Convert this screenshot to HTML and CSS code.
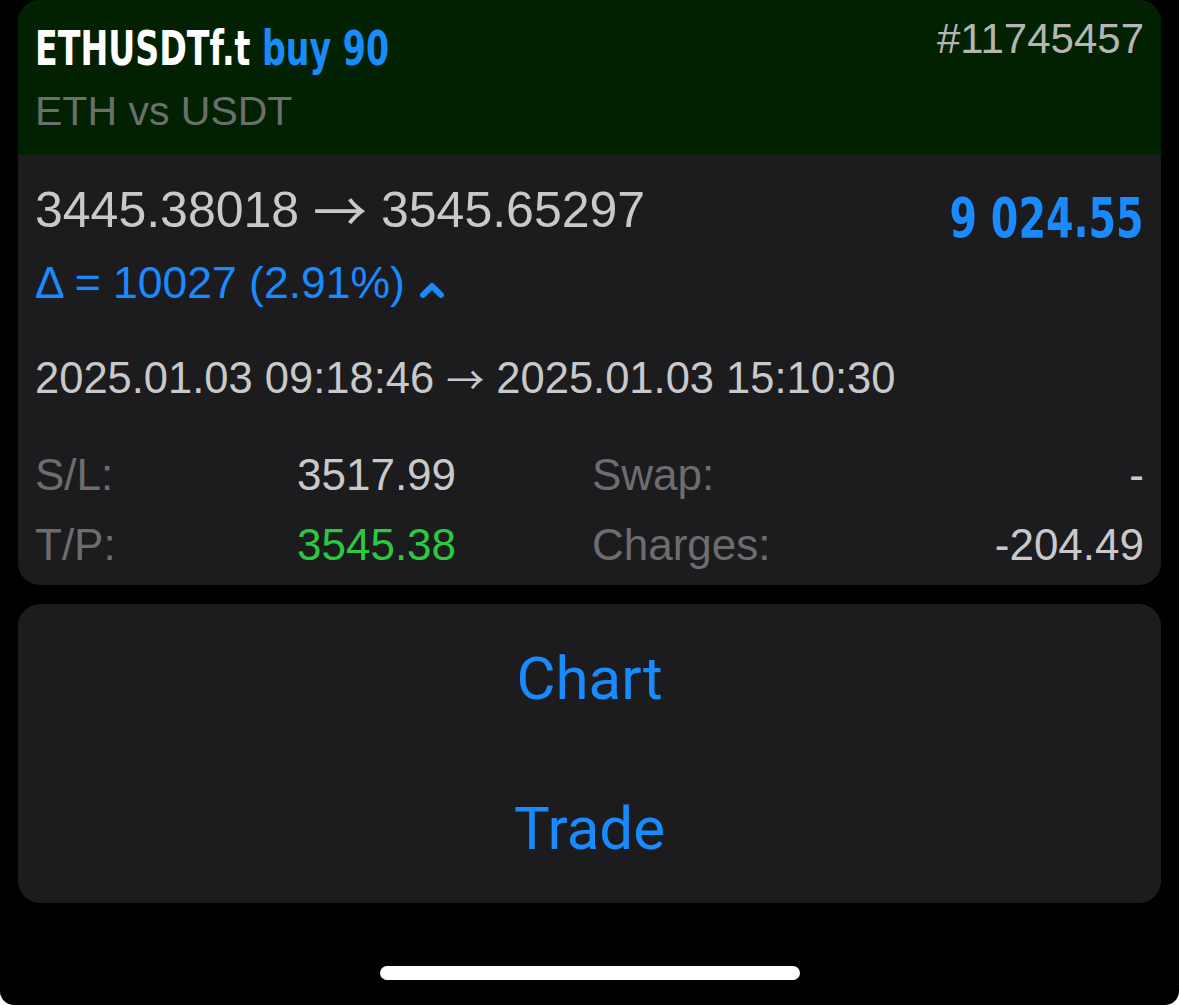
FILE: index.html
```html
<!DOCTYPE html>
<html lang="en">
<head>
<meta charset="UTF-8">
<meta name="viewport" content="width=device-width, initial-scale=1.0">
<title>Position ETHUSDTf.t</title>
<link rel="stylesheet" href="styles.css">
</head>
<body>

<div class="screen">

    <!-- Position card -->
    <div class="card position">
        <div class="head">
            <div class="head-left">
                <div class="title">ETHUSDTf.t <span class="side">buy 90</span></div>
                <div class="subtitle">ETH vs USDT</div>
            </div>
            <div class="ticket">#11745457</div>
        </div>

        <div class="details">
            <div class="prices">
                <div class="price-col">
                    <div class="price-line">3445.38018 <span class="arrow">&rarr;</span> 3545.65297</div>
                    <div class="delta">&Delta; = 10027 (2.91%)
                        <svg class="caret" width="26" height="18" viewBox="0 0 26 18">
                            <path d="M4 14 L13 5 L22 14" fill="none" stroke="#1a8aff" stroke-width="6" stroke-linecap="round" stroke-linejoin="round"/>
                        </svg>
                    </div>
                </div>
                <div class="profit">9 024.55</div>
            </div>

            <div class="times">2025.01.03 09:18:46 <span class="arrow">&rarr;</span> 2025.01.03 15:10:30</div>

            <div class="stats">
                <span class="label">S/L:</span>
                <span class="value">3517.99</span>
                <span class="label">Swap:</span>
                <span class="value right">-</span>

                <span class="label">T/P:</span>
                <span class="value green">3545.38</span>
                <span class="label">Charges:</span>
                <span class="value right">-204.49</span>
            </div>
        </div>
    </div>

    <!-- Actions -->
    <div class="card actions">
        <a class="action" href="#">Chart</a>
        <a class="action" href="#">Trade</a>
    </div>

    <div class="home-bar"></div>
</div>

</body>
</html>
```

FILE: styles.css
```css
body {
    margin: 0;
    background: #ffffff;
    font-family: "Liberation Sans", Arial, sans-serif;
}

.screen {
    height: 1005px;
    box-sizing: border-box;
    background: #000000;
    border-radius: 0 0 14px 14px;
    padding: 0 18px;
    display: flex;
    flex-direction: column;
}

.card {
    background: #1c1c1e;
    border-radius: 22px;
    overflow: hidden;
}

/* header */
.head {
    background: #012101;
    display: flex;
    justify-content: space-between;
    align-items: flex-start;
    padding: 15px 17px 20px;
}

.title {
    margin-top: 5px;
    display: inline-block;
    white-space: nowrap;
    font-family: "DejaVu Sans Condensed", "DejaVu Sans", sans-serif;
    font-weight: bold;
    font-size: 48px;
    line-height: 56px;
    color: #ffffff;
    transform: scaleX(0.77);
    transform-origin: left center;
}

.title .side {
    color: #1a8aff;
}

.subtitle {
    margin-top: 11px;
    font-size: 41px;
    line-height: 48px;
    color: #6b6e6b;
}

.ticket {
    font-size: 42px;
    line-height: 48px;
    color: #b4b6b4;
}

/* body of the card */
.details {
    padding: 27px 17px 5px;
}

.prices {
    display: flex;
    justify-content: space-between;
    align-items: flex-start;
}

.price-line {
    font-size: 50px;
    line-height: 56px;
    color: #c9c9cb;
}

/* long thin arrow, like the iOS one */
.arrow {
    font-family: "Noto Sans CJK SC", sans-serif;
    line-height: 0;
}

.price-line .arrow {
    font-size: 54px;
    vertical-align: -5px;
}

.times .arrow {
    font-size: 38px;
    vertical-align: -1px;
}

.delta {
    margin-top: 19px;
    font-size: 44.5px;
    line-height: 52px;
    color: #1a8aff;
}

.delta .caret {
    margin-left: 2px;
    vertical-align: -1px;
}

.profit {
    margin-top: 8px;
    white-space: nowrap;
    font-family: "DejaVu Sans Condensed", "DejaVu Sans", sans-serif;
    font-weight: bold;
    font-size: 55px;
    line-height: 56px;
    color: #1a8aff;
    transform: scaleX(0.8);
    transform-origin: right center;
}

.times {
    margin-top: 44px;
    font-size: 43.5px;
    line-height: 50px;
    color: #c9c9cb;
}

.stats {
    margin-top: 37px;
    display: grid;
    grid-template-columns: 262px 295px 1fr auto;
    font-size: 44px;
    line-height: 70px;
}

.stats .label {
    color: #6d6d70;
}

.stats .value {
    color: #c9c9cb;
}

.stats .value.green {
    color: #2bc840;
}

.stats .right {
    text-align: right;
}

/* buttons */
.actions {
    margin-top: 19px;
    display: flex;
    flex-direction: column;
}

.action {
    height: 149.5px;
    display: flex;
    align-items: center;
    justify-content: center;
    font-family: Roboto, sans-serif;
    font-size: 60px;
    color: #1a8aff;
    text-decoration: none;
}

.home-bar {
    margin: auto auto 25px;
    width: 420px;
    height: 14px;
    border-radius: 7px;
    background: #ffffff;
}
```
